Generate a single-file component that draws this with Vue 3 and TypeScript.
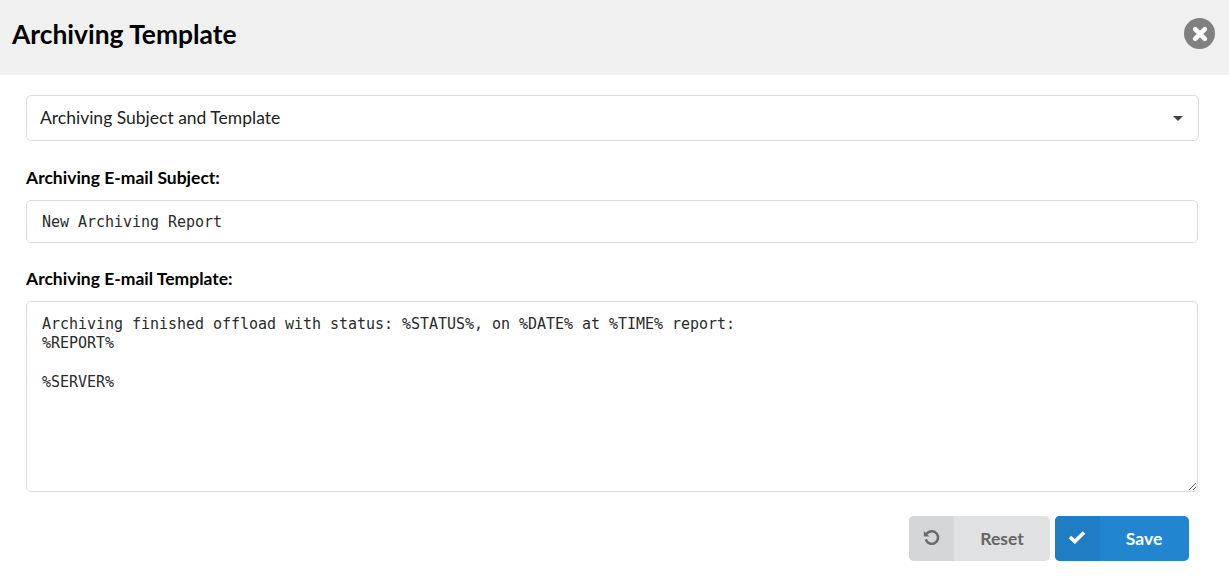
<script setup lang="ts">
const subject = 'New Archiving Report'
const body = 'Archiving finished offload with status: %STATUS%, on %DATE% at %TIME% report:\n%REPORT%\n\n%SERVER%'
</script>

<template>
  <div class="dialog">
    <header class="head">
      <h1 class="title">Archiving Template</h1>
      <button class="close" aria-label="Close">
        <svg width="16" height="16" viewBox="0 0 16 16"><path d="M3.2 3.2 12.8 12.8M12.8 3.2 3.2 12.8" stroke="#fff" stroke-width="4.6" stroke-linecap="round"/></svg>
      </button>
    </header>
    <main class="content">
      <div class="select">
        <span>Archiving Subject and Template</span>
        <i class="caret"></i>
      </div>
      <label class="label first">Archiving E-mail Subject:</label>
      <input class="field input" :value="subject" />
      <label class="label second">Archiving E-mail Template:</label>
      <textarea class="field area" :value="body"></textarea>
      <div class="actions">
        <button class="btn reset">
          <span class="ico">
            <svg class="ico-svg reset-svg" width="18" height="18" viewBox="0 0 18 18" fill="none"><path d="M3.8 10.4A6.3 6.3 0 1 0 5.2 4.2L3.4 6" stroke="#6b6b6b" stroke-width="2.5"/><path d="M1.8 2V7.6H7.4Z" fill="#6b6b6b"/></svg>
          </span>
          <span class="txt">Reset</span>
        </button>
        <button class="btn save">
          <span class="ico">
            <svg class="ico-svg save-svg" width="18" height="14" viewBox="0 0 18 14" fill="none"><path d="M2 7 6.8 11.6 16 2.4" stroke="#fff" stroke-width="3.6"/></svg>
          </span>
          <span class="txt">Save</span>
        </button>
      </div>
    </main>
  </div>
</template>

<style>
html, body { margin: 0; background: #fff; }
</style>

<style scoped>
.dialog { width: 1229px; height: 576px; overflow: hidden; font-family: Lato, sans-serif; color: #000; }
.head { height: 75px; background: #f0f0f0; display: flex; align-items: center; justify-content: space-between; padding: 0 14px 8px 12px; box-sizing: border-box; }
.title { margin: 0; font-size: 26.4px; font-weight: 700; line-height: 34px; color: #000; }
.close { width: 31px; height: 31px; border-radius: 50%; border: 0; padding: 0; background: #808080; display: flex; align-items: center; justify-content: center; }
.content { padding: 20px 30px 0 26px; }
.select { width: 1173px; height: 46px; box-sizing: border-box; border: 1px solid #dcdcdc; border-radius: 5px; display: flex; align-items: center; justify-content: space-between; padding: 0 15px 2px 13px; font-size: 17.5px; color: #222; }
.caret { width: 0; height: 0; border-left: 5px solid transparent; border-right: 5px solid transparent; border-top: 5px solid #444; margin-top: 2px; }
.label { display: block; font-size: 17.5px; font-weight: 700; line-height: 20px; color: #000; }
.first { margin-top: 27px; }
.second { margin-top: 26px; }
.field { display: block; width: 1172px; box-sizing: border-box; border: 1px solid #dcdcdc; border-radius: 5px; font-family: "DejaVu Sans Mono", monospace; font-size: 15px; letter-spacing: -0.03px; color: #2b2b2b; background: #fff; outline: none; }
.input { height: 43px; margin-top: 12px; padding: 0 15px; }
.area { height: 191px; margin-top: 12px; padding: 12.5px 15px; line-height: 19.5px; resize: vertical; }
.actions { display: flex; justify-content: flex-end; gap: 5px; margin-top: 24px; width: 1163px; }
.btn { height: 45px; border: 0; padding: 0; border-radius: 5px; display: flex; align-items: stretch; overflow: hidden; font-family: Lato, sans-serif; font-size: 17.5px; font-weight: 700; }
.ico { width: 45px; display: flex; align-items: center; justify-content: center; }
.ico-svg { margin-bottom: 2px; }
.reset-svg { margin-right: 2px; }
.save-svg { margin-right: 1px; margin-bottom: 3px; }
.txt { flex: 1; display: flex; align-items: center; justify-content: center; }
.reset { width: 141px; background: #e0e1e3; color: #666; }
.reset .ico { background: #d5d6d8; }
.save { width: 134px; background: #2185d0; color: #fff; }
.save .ico { background: #1e7dc5; }
.save .txt { padding-right: 1px; }
</style>
